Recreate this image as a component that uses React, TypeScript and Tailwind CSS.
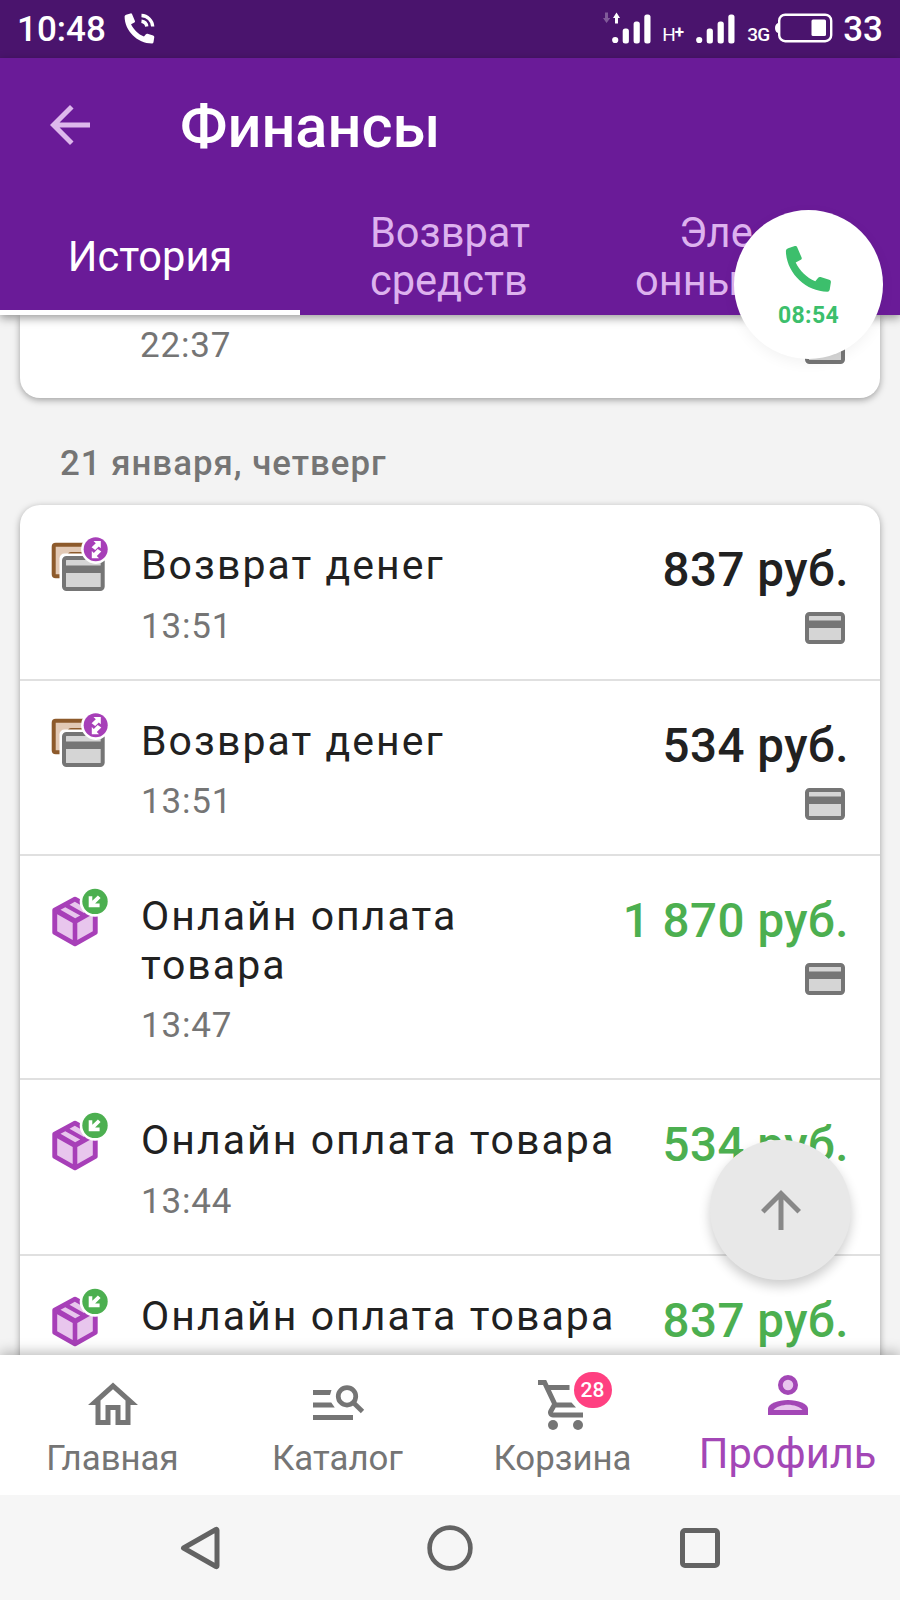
interface Operation {
  type: 'refund' | 'payment'
  title: string
  time?: string
  amount: string
  income?: boolean
}

const operations: Operation[] = [
  { type: 'refund', title: 'Возврат денег', time: '13:51', amount: '837 руб.' },
  { type: 'refund', title: 'Возврат денег', time: '13:51', amount: '534 руб.' },
  { type: 'payment', title: 'Онлайн оплата товара', time: '13:47', amount: '1 870 руб.', income: true },
  { type: 'payment', title: 'Онлайн оплата товара', time: '13:44', amount: '534 руб.', income: true },
  { type: 'payment', title: 'Онлайн оплата товара', amount: '837 руб.', income: true }
]

const HANDSET =
  'M3.2 3.2 9.800 1.100Q11.600.6 12.300 2.400L16.600 12.600Q17.200 14 15.800 14.800L10.700 17.500C14.500 25.500 21.500 32.500 30.300 36.300L33.200 32.700Q34.200 31.700 35.600 32.100L44.200 34.700Q46.200 35.400 45.900 37.300L44.700 44.800Q44.300 46.700 42.400 46.700C20 46.500 1 27 .9 5.700Q1 3.900 3.200 3.200z'

function SignalBars() {
  return (
    <svg width="39" height="30" viewBox="0 0 39 30" fill="#fff">
      <circle cx="3.2" cy="26" r="3.1" />
      <rect x="10.7" y="14.5" width="6.2" height="15" rx="2.5" />
      <rect x="21.6" y="7.5" width="6.2" height="22" rx="2.5" />
      <rect x="32.3" y="0.5" width="6.2" height="29" rx="2.5" />
    </svg>
  )
}

function StatusBar() {
  return (
    <div className="h-[58px] shrink-0 bg-[#4a146d] text-white flex items-center justify-between pl-[17px] pr-[17px]">
      <div className="flex items-center">
        <span className="text-[35px] leading-[54px] font-medium mt-[1px]">10:48</span>
        <svg width="31" height="31" viewBox="0 0 47 47" className="ml-[18px] -mt-[2px]">
          <path d={HANDSET} fill="#fff" transform="translate(0 -0.5)" />
          <path d="M26.500 3.800A17.500 17.500 0 0 1 43.500 20.500M26.500 12.500A9 9 0 0 1 34.500 20.500" fill="none" stroke="#fff" strokeWidth="5" />
        </svg>
      </div>
      <div className="flex items-center">
        <svg width="17" height="12" viewBox="0 0 17 12" className="-mt-[22px] -mr-[8px]">
          <path d="M2 0.5h3v5.5h2.3L3.5 11 0 6h2z" fill="#fff" fillOpacity="0.3" />
          <path d="M12 11.5h3V6h2L13.5 0.5 10 6h2z" fill="#fff" />
        </svg>
        <SignalBars />
        <span className="text-[19px] leading-[24px] mt-[12px] ml-[11px] w-[34px] tracking-[-1px]">
          H<span className="relative -top-[3px] text-[17px] font-bold">+</span>
        </span>
        <SignalBars />
        <span className="text-[19px] leading-[24px] mt-[12px] ml-[12px] w-[28px] tracking-[-0.8px] font-medium">3G</span>
        <svg width="58" height="30" viewBox="0 0 58 30" className="-mt-[3px]">
          <path d="M4 10C1.500 10 0 12 0 15s1.500 5 4 5z" fill="#fff" />
          <rect x="4.200" y="1.700" width="52" height="26.500" rx="6" fill="none" stroke="#fff" strokeWidth="2.400" />
          <rect x="36.500" y="6.500" width="14.500" height="16.500" rx="1.500" fill="#fff" />
        </svg>
        <span className="text-[35px] leading-[54px] font-medium ml-[10px] mt-[1px]">33</span>
      </div>
    </div>
  )
}

function Header() {
  return (
    <header className="relative z-10 shrink-0 h-[257px] bg-[#6a1b98] shadow-[0_3px_9px_rgba(0,0,0,0.4)] flex flex-col">
      <div className="h-[132px] flex items-center pl-[40px] pt-[2px]">
        <svg width="60" height="60" viewBox="0 0 24 24" fill="#ddb8ec">
          <path d="M20 11H7.830l5.590-5.590L12 4l-8 8 8 8 1.410-1.410L7.830 13H20v-2z" />
        </svg>
        <h1 className="ml-[80px] mt-[3px] text-[59.500px] leading-[68px] font-medium text-white">Финансы</h1>
      </div>
      <div className="grow grid grid-cols-3 text-[41.600px] leading-[48.500px]">
        <div className="flex flex-col">
          <div className="grow flex items-center justify-center text-white pt-[14px]">История</div>
          <div className="h-[5px] bg-white" />
        </div>
        <div className="flex items-center justify-center text-[#ddb2ee] pt-[9px]">
          <div>
            Возврат
            <br />
            средств
          </div>
        </div>
        <div className="flex flex-col justify-center text-[#ddb2ee] pt-[9px]">
          <div className="pl-[79px]">Эле</div>
          <div className="pl-[35px]">онны</div>
        </div>
      </div>
    </header>
  )
}

function CardIcon() {
  return (
    <svg width="40" height="32" viewBox="0 0 40 32">
      <rect x="2" y="2" width="36" height="28" rx="2.500" fill="#d5d5d5" stroke="#757575" strokeWidth="4" />
      <rect x="2" y="8.500" width="36" height="7.500" fill="#757575" />
    </svg>
  )
}

function RefundIcon() {
  return (
    <svg width="60" height="66" viewBox="0 0 60 66" className="shrink-0">
      <rect x="5.700" y="12.700" width="42" height="31.500" rx="2" fill="#e2c9b5" stroke="#8d5a2b" strokeWidth="4" />
      <path d="M20 26v-3q0-3 3-3h20v6z" fill="#8d5a2b" />
      <rect x="11.500" y="21.500" width="47" height="36" rx="5" fill="#fff" />
      <rect x="16" y="26" width="38.700" height="31" rx="2.500" fill="#d5d5d5" stroke="#757575" strokeWidth="4" />
      <rect x="15" y="33.500" width="40" height="7.500" fill="#757575" />
      <circle cx="47.700" cy="17.300" r="14.600" fill="#fff" />
      <circle cx="47.700" cy="17.300" r="12" fill="#a73fb8" />
      <path d="M45.500 9H52.800V16.300L50.800 14.400 47.200 18 43.600 15.200 47.800 11.300z" fill="#fff" />
      <path d="M43.800 26.300V19l2 1.900 3.900-3.900 3.600 2.600-4.500 4.400 2.200 2.300z" fill="#fff" />
    </svg>
  )
}

function PaymentIcon() {
  return (
    <svg width="60" height="66" viewBox="0 0 60 66" className="shrink-0">
      <path
        d="M27 16.200 47.300 27v22.500L27 60.800 6.700 49.500V27z"
        fill="#a73fb8"
        stroke="#a73fb8"
        strokeWidth="4.800"
        strokeLinejoin="round"
      />
      <path d="M9.200 31.300 24.700 40v17L9.200 48.300zM44.800 31.300 29.300 40v17l15.500-8.700z" fill="#e8c6ed" />
      <path d="M12.500 26.800 17.300 24.200 32.200 32.600 27.200 35.300zM21.500 21.700 26.800 18.800 36 24v6z" fill="#e8c6ed" />
      <circle cx="47" cy="18.400" r="15.300" fill="#fff" />
      <circle cx="47" cy="18.400" r="12.700" fill="#4caf50" />
      <path d="M40.700 13.200h3.600v4.600l5.600-5.400 2.700 2.600-5.500 5.600h4.500v3.700H40.700z" fill="#fff" />
    </svg>
  )
}

function OperationRow({ operation }: { operation: Operation }) {
  return (
    <div className="flex items-start min-h-[174px] pl-[28px] pr-[32px] border-b-2 border-[#e0e0e0] last:border-b-0">
      <div className="pt-[27px]">{operation.type === 'refund' ? <RefundIcon /> : <PaymentIcon />}</div>
      <div className="grow ml-[33px] pt-[36px] pb-[32px]">
        <div className="text-[41px] leading-[48.500px] tracking-[2.050px] text-[#212121]">{operation.title}</div>
        {operation.time && (
          <div className="mt-[17px] text-[35px] leading-[40px] tracking-[0.800px] text-[#757575]">{operation.time}</div>
        )}
      </div>
      <div className="shrink-0 ml-[14px] pt-[38px] flex flex-col items-end">
        <div
          className={
            'text-[47.500px] leading-[54px] font-medium tracking-[0.500px] whitespace-nowrap -mr-[1px] ' +
            (operation.income ? 'text-[#4caf50]' : 'text-[#212121]')
          }
        >
          {operation.amount}
        </div>
        <div className="mt-[15px] mr-[3px]">
          <CardIcon />
        </div>
      </div>
    </div>
  )
}

function BottomNav() {
  return (
    <nav className="relative z-10 shrink-0 h-[140px] bg-white shadow-[0_-3px_12px_rgba(0,0,0,0.26)] grid grid-cols-4 text-[34.800px] leading-[40px] text-[#757575]">
      <div className="flex flex-col items-center pt-[20px]">
        <svg width="60" height="60" viewBox="0 0 24 24" fill="#757575">
          <path d="M12 5.690l5 4.500V18h-2v-6H9v6H7v-7.810l5-4.500M12 3L2 12h3v8h6v-6h2v6h6v-8h3L12 3z" />
        </svg>
        <div className="mt-[3px]">Главная</div>
      </div>
      <div className="flex flex-col items-center pt-[20px]">
        <svg width="60" height="60" viewBox="0 0 24 24" fill="#757575">
          <path d="M2 6h7.400l-.6 2H2zM2 11h7.300l1.400 2H2zM2 16h16v2H2z" />
          <path d="M18.100 11l3.700 3.600" fill="none" stroke="#757575" strokeWidth="1.900" />
          <circle cx="15.600" cy="8.500" r="3.500" fill="none" stroke="#757575" strokeWidth="1.900" />
        </svg>
        <div className="mt-[3px]">Каталог</div>
      </div>
      <div className="flex flex-col items-center pt-[20px]">
        <div className="relative">
          <svg width="60" height="60" viewBox="0 0 24 24" fill="#757575">
            <path d="M2 2h3.270l.94 2H14.600v2H7.150l2.350 5h5.900l1.800 2H9.100L8 15h12v2H8c-1.520 0-2.480-1.630-1.750-2.970L7.600 11.590 4 4H2z" />
            <circle cx="8" cy="20" r="2" />
            <circle cx="18" cy="20" r="2" />
          </svg>
          <div className="absolute left-[41px] -top-[3px] w-[38px] h-[36px] rounded-full bg-[#ff4081] text-white text-[21px] leading-[36px] font-medium text-center">
            28
          </div>
        </div>
        <div className="mt-[3px]">Корзина</div>
      </div>
      <div className="flex flex-col items-center pt-[10px] text-[#a347b6]">
        <svg width="60" height="60" viewBox="0 0 24 24">
          <circle cx="12" cy="8" r="3.050" fill="#e8c6ed" stroke="#a347b6" strokeWidth="1.900" />
          <path d="M4 20v-2.500c0-2 4-3.500 8-3.500s8 1.500 8 3.500V20z" fill="#a347b6" />
          <path d="M6.200 18c.8-1.200 3.600-2.100 5.800-2.100s5 .9 5.800 2.100z" fill="#e8c6ed" />
        </svg>
        <div className="mt-[5px] text-[41.600px] leading-[48px]">Профиль</div>
      </div>
    </nav>
  )
}

function SystemNav() {
  return (
    <div className="relative z-10 h-[105px] shrink-0 bg-[#f6f6f6] px-[75px] grid grid-cols-3 items-center justify-items-center">
      <svg width="50" height="50" viewBox="0 0 50 50" fill="none" stroke="#636363" strokeWidth="5" strokeLinejoin="round">
        <path d="M8.500 25 41 6.500q1-.5 1 .7v35.600q0 1.200-1 .7z" />
      </svg>
      <svg width="50" height="50" viewBox="0 0 50 50" fill="none" stroke="#636363" strokeWidth="4.600">
        <circle cx="25" cy="25" r="20.400" />
      </svg>
      <svg width="50" height="50" viewBox="0 0 50 50" fill="none" stroke="#636363" strokeWidth="5">
        <rect x="7.500" y="7.500" width="35" height="35" rx="2.500" />
      </svg>
    </div>
  )
}

export default function App() {
  return (
    <div className="relative w-[900px] h-[1600px] overflow-hidden flex flex-col bg-[#f3f3f3] font-['Roboto',sans-serif]">
      <StatusBar />
      <Header />

      {/* Operations history */}
      <main className="grow min-h-0 overflow-hidden px-[20px]">
        <div className="h-[82.500px] bg-white rounded-b-[20px] shadow-[0_2px_7px_rgba(0,0,0,0.35)] flex items-end justify-between pl-[120px] pr-[35px]">
          <div className="mb-[32px] text-[35px] leading-[40px] tracking-[0.800px] text-[#757575]">22:37</div>
          <div className="mb-[34px]">
            <CardIcon />
          </div>
        </div>
        <div className="h-[107.500px] pl-[40px] pt-[45.500px] text-[34.800px] leading-[40px] font-medium tracking-[1px] text-[#757575]">
          21 января, четверг
        </div>
        <div className="bg-white rounded-[20px] shadow-[0_2px_7px_rgba(0,0,0,0.35)]">
          {operations.map((operation, index) => (
            <OperationRow key={index} operation={operation} />
          ))}
        </div>
      </main>

      <BottomNav />
      <SystemNav />

      {/* Scroll to top */}
      <button className="absolute left-[710px] top-[1140px] w-[141px] h-[140px] rounded-full bg-[#e8e8e8] shadow-[0_6px_12px_rgba(0,0,0,0.2)] flex items-center justify-center">
        <svg width="60" height="60" viewBox="0 0 24 24" fill="#888">
          <path d="M4 12l1.410 1.410L11 7.830V20h2V7.830l5.580 5.590L20 12l-8-8-8 8z" />
        </svg>
      </button>

      {/* Active call bubble */}
      <div className="absolute z-20 left-[734px] top-[210px] w-[149px] h-[149px] rounded-full bg-white shadow-[0_4px_14px_rgba(0,0,0,0.05)] flex flex-col items-center pt-[35px] text-[#3cbf6c]">
        <svg width="47" height="48" viewBox="0 0 47 48" fill="currentColor">
          <path d={HANDSET} />
        </svg>
        <div className="mt-[9px] text-[23px] leading-[28px] font-bold tracking-[0.300px]">08:54</div>
      </div>
    </div>
  )
}
